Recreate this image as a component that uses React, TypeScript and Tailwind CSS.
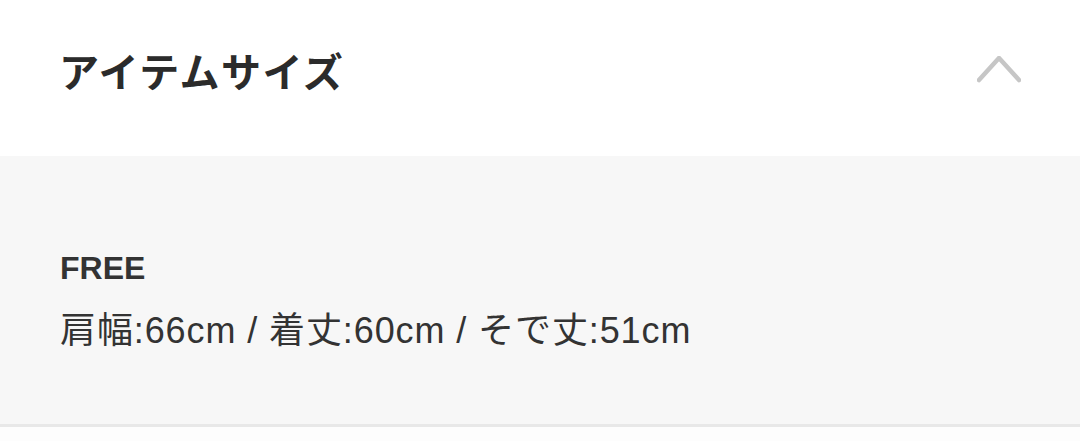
export default function App() {
  return (
    <div
      className="w-[1080px] h-[441px] bg-white flex flex-col overflow-hidden"
      style={{ fontFamily: '"Liberation Sans", "Noto Sans CJK JP", sans-serif' }}
    >
      <div className="h-[156px] shrink-0 flex items-center justify-between pl-[59px] pr-[60px] bg-white">
        <div
          className="text-[40px] font-bold text-[#2b2b2b] leading-none tracking-[1.5px] -mt-[16px]"
          style={{ fontFamily: '"Noto Sans CJK JP", sans-serif' }}
        >
          アイテムサイズ
        </div>
        <svg width="44" height="28" viewBox="0 0 44 28" className="-mt-[16px] mr-[-1px]">
          <polyline points="2,24 22,2 42,24" fill="none" stroke="#c6c6c6" strokeWidth="4.5" strokeLinecap="round" strokeLinejoin="round" />
        </svg>
      </div>
      <div className="h-[271px] shrink-0 bg-[#f7f7f7] border-b-[3px] border-[#e8e8e8] flex flex-col pl-[60px] pt-[96px]">
        <div className="text-[32px] font-bold text-[#333333] leading-none">FREE</div>
        <div className="text-[36px] text-[#333333] leading-none mt-[29px] tracking-[0.9px]">肩幅:66cm / 着丈:60cm / そで丈:51cm</div>
      </div>
      <div className="flex-1 bg-[#fdfdfd]" />
    </div>
  );
}
